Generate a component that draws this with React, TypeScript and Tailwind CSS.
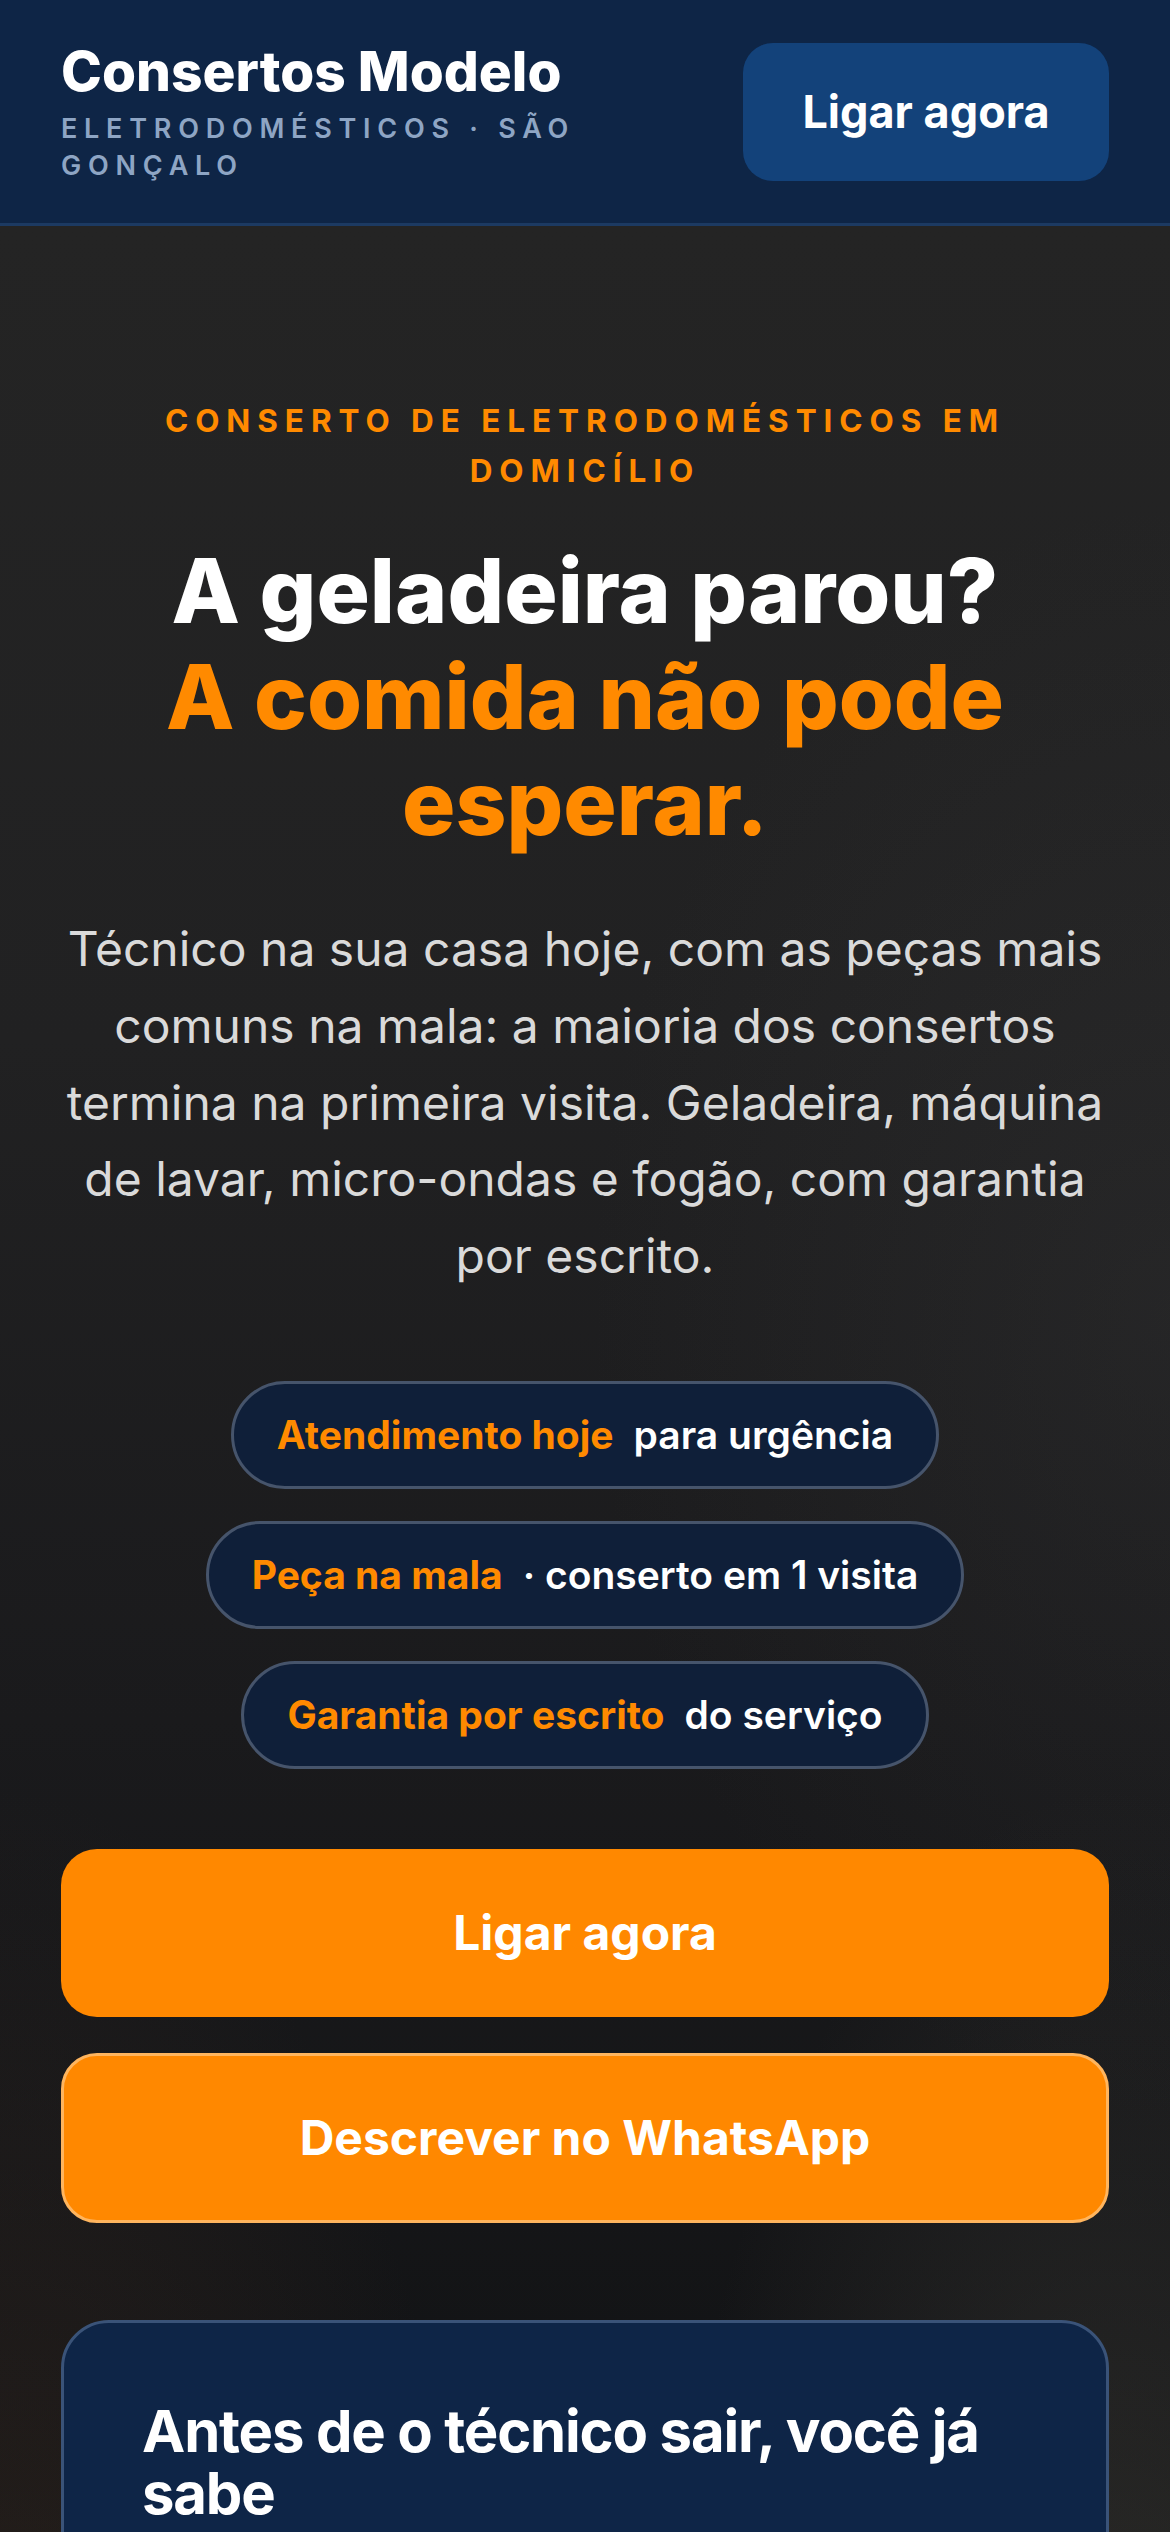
import React from "react";

const pills: { strong: string; rest: string }[] = [
  { strong: "Atendimento hoje", rest: "para urgência" },
  { strong: "Peça na mala", rest: "· conserto em 1 visita" },
  { strong: "Garantia por escrito", rest: "do serviço" },
];

export default function App() {
  return (
    <div className="w-[1170px] min-h-[2532px] overflow-hidden bg-[#141517] font-['Inter','Noto_Sans',sans-serif] antialiased">
      <header className="flex h-[226px] items-center justify-between border-b-[3px] border-[#1c3a62] bg-[#0e2546] px-[61px]">
        <div className="min-w-0 flex-1">
          <div className="text-[55px] font-extrabold leading-[62px] tracking-normal text-white">
            Consertos Modelo
          </div>
          <div className="mt-[8px] max-w-[600px] text-[27px] font-semibold leading-[37px] tracking-[0.25em] text-[#8ea5c4]">
            ELETRODOMÉSTICOS · SÃO GONÇALO
          </div>
        </div>
        <button className="ml-[24px] flex h-[138px] w-[366px] items-center justify-center rounded-[30px] bg-[#13427a] text-[45px] font-bold text-white">
          Ligar agora
        </button>
      </header>

      <section className="relative overflow-hidden bg-[linear-gradient(180deg,#242424_0%,#212122_30%,#1a1a1c_55%,#131416_78%,#121314_88%,#1b1817_100%)]">
        <div className="pointer-events-none absolute inset-0 bg-[radial-gradient(ellipse_at_100%_40%,rgba(60,60,60,0.25),transparent_35%)]" />
        <div className="pointer-events-none absolute inset-0 bg-[radial-gradient(ellipse_at_95%_100%,rgba(85,82,74,0.45),transparent_30%)]" />
        <div className="pointer-events-none absolute inset-0 bg-[radial-gradient(ellipse_at_0%_100%,rgba(70,50,38,0.45),transparent_30%)]" />

        <div className="relative px-[61px] pt-[170px] pb-[200px] text-center">
          <div className="mx-auto max-w-[900px] text-[31.5px] font-bold leading-[50px] tracking-[0.22em] text-[#ff8a00]">
            CONSERTO DE ELETRODOMÉSTICOS EM DOMICÍLIO
          </div>

          <h1 className="mt-[42px] text-[89px] font-extrabold leading-[106px] tracking-normal text-white">
            <span className="block">A geladeira parou?</span>
            <span className="block text-[#ff8a00]">A comida não pode esperar.</span>
          </h1>

          <p className="mt-[55px] text-[48px] font-normal leading-[76.8px] text-[#dadada]">
            Técnico na sua casa hoje, com as peças mais comuns na mala: a maioria dos consertos termina na primeira visita. Geladeira, máquina de lavar, micro-ondas e fogão, com garantia por escrito.
          </p>

          <div className="mt-[86px] flex flex-col items-center gap-[32px]">
            {pills.map((p) => (
              <div
                key={p.strong}
                className="inline-flex h-[108px] items-center gap-[20px] rounded-full border-[3px] border-[#46546b] bg-[#0f1f39] px-[43px] text-[39px] leading-[58px]"
              >
                <span className="font-bold text-[#ff8a00]">{p.strong}</span>
                <span className="font-semibold text-white">{p.rest}</span>
              </div>
            ))}
          </div>

          <div className="mt-[80px] flex flex-col gap-[36px]">
            <button className="flex h-[168px] w-full items-center justify-center rounded-[36px] bg-[#ff8800] text-[48px] font-bold text-white">
              Ligar agora
            </button>
            <button className="flex h-[170px] w-full items-center justify-center rounded-[36px] border-[3px] border-[#ffb55e] bg-[#ff8800] text-[48px] font-bold text-white">
              Descrever no WhatsApp
            </button>
          </div>

          <div className="mt-[97px] min-h-[420px] rounded-[48px] border-[3px] border-[#3a5378] bg-[#0e2547] px-[78px] pt-[77px] pb-[80px] text-left">
            <h2 className="text-[58px] font-bold leading-[62px] tracking-[-0.02em] text-white">
              Antes de o técnico sair, você já sabe
            </h2>
          </div>
        </div>
      </section>
    </div>
  );
}
